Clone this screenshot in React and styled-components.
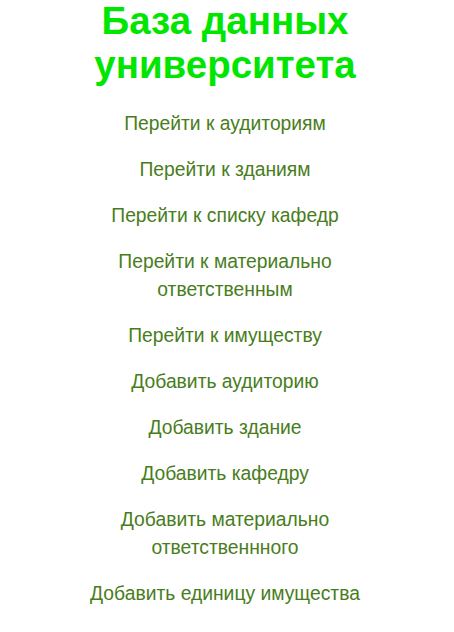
import React from "react";
import styled, { createGlobalStyle } from "styled-components";

const GlobalStyle = createGlobalStyle`
  body {
    margin: 0;
    background: #fff;
    font-family: "Liberation Sans", Arial, sans-serif;
  }
`;

const Page = styled.div`
  width: 450px;
  display: flex;
  flex-direction: column;
  align-items: center;
  text-align: center;
`;

const Title = styled.h1`
  margin: -1px 0 23px;
  font-size: 38.5px;
  line-height: 44px;
  font-weight: bold;
  color: #00e600;
`;

const Menu = styled.nav`
  display: flex;
  flex-direction: column;
  align-items: center;
  gap: 18px;
`;

const MenuLink = styled.a`
  display: block;
  max-width: 300px;
  font-size: 19.3px;
  line-height: 28px;
  color: #487d1c;
  text-decoration: none;
  cursor: pointer;
`;

const links = [
  "Перейти к аудиториям",
  "Перейти к зданиям",
  "Перейти к списку кафедр",
  "Перейти к материально ответственным",
  "Перейти к имуществу",
  "Добавить аудиторию",
  "Добавить здание",
  "Добавить кафедру",
  "Добавить материально ответственнного",
  "Добавить единицу имущества",
];

const App = () => {
  return (
    <>
      <GlobalStyle />
      <Page>
        <Title>
          База данных
          <br />
          университета
        </Title>
        <Menu>
          {links.map((text) => (
            <MenuLink key={text}>{text}</MenuLink>
          ))}
        </Menu>
      </Page>
    </>
  );
};

export default App;
